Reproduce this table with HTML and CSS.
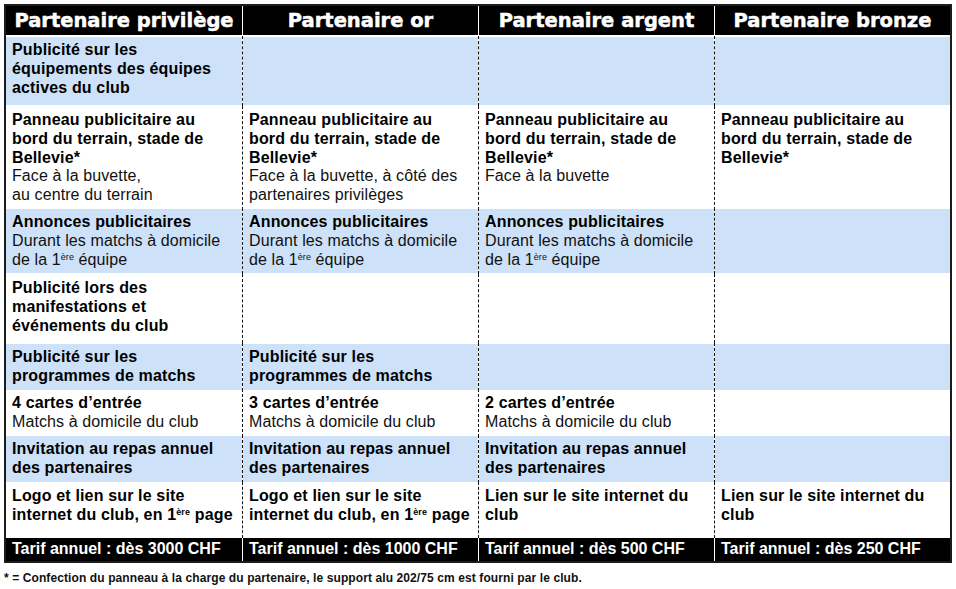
FILE: index.html
```html
<!DOCTYPE html>
<html lang="fr">
<head>
<meta charset="utf-8">
<title>Partenaires</title>
<link rel="stylesheet" href="styles.css">
</head>
<body>
<div class="sheet">
  <div class="tbl">
    <div class="row head">
      <div class="cell"><div class="tx">Partenaire privilège</div></div>
      <div class="cell"><div class="tx">Partenaire or</div></div>
      <div class="cell"><div class="tx">Partenaire argent</div></div>
      <div class="cell"><div class="tx">Partenaire bronze</div></div>
    </div>
    <div class="row blue r1">
      <div class="cell"><div class="tx"><b>Publicité sur les<br>équipements des équipes<br>actives du club</b></div></div>
      <div class="cell"></div>
      <div class="cell"></div>
      <div class="cell"></div>
    </div>
    <div class="row r2">
      <div class="cell"><div class="tx"><b>Panneau publicitaire au<br>bord du terrain, stade de<br>Bellevie*</b><br>Face à la buvette,<br>au centre du terrain</div></div>
      <div class="cell"><div class="tx"><b>Panneau publicitaire au<br>bord du terrain, stade de<br>Bellevie*</b><br>Face à la buvette, à côté des<br>partenaires privilèges</div></div>
      <div class="cell"><div class="tx"><b>Panneau publicitaire au<br>bord du terrain, stade de<br>Bellevie*</b><br>Face à la buvette</div></div>
      <div class="cell"><div class="tx"><b>Panneau publicitaire au<br>bord du terrain, stade de<br>Bellevie*</b></div></div>
    </div>
    <div class="row blue r3">
      <div class="cell"><div class="tx"><b>Annonces publicitaires</b><br>Durant les matchs à domicile<br>de la 1<sup>ère</sup> équipe</div></div>
      <div class="cell"><div class="tx"><b>Annonces publicitaires</b><br>Durant les matchs à domicile<br>de la 1<sup>ère</sup> équipe</div></div>
      <div class="cell"><div class="tx"><b>Annonces publicitaires</b><br>Durant les matchs à domicile<br>de la 1<sup>ère</sup> équipe</div></div>
      <div class="cell"></div>
    </div>
    <div class="row r4">
      <div class="cell"><div class="tx"><b>Publicité lors des<br>manifestations et<br>événements du club</b></div></div>
      <div class="cell"></div>
      <div class="cell"></div>
      <div class="cell"></div>
    </div>
    <div class="row blue r5">
      <div class="cell"><div class="tx"><b>Publicité sur les<br>programmes de matchs</b></div></div>
      <div class="cell"><div class="tx"><b>Publicité sur les<br>programmes de matchs</b></div></div>
      <div class="cell"></div>
      <div class="cell"></div>
    </div>
    <div class="row r6">
      <div class="cell"><div class="tx"><b>4 cartes d’entrée</b><br>Matchs à domicile du club</div></div>
      <div class="cell"><div class="tx"><b>3 cartes d’entrée</b><br>Matchs à domicile du club</div></div>
      <div class="cell"><div class="tx"><b>2 cartes d’entrée</b><br>Matchs à domicile du club</div></div>
      <div class="cell"></div>
    </div>
    <div class="row blue r7">
      <div class="cell"><div class="tx"><b>Invitation au repas annuel<br>des partenaires</b></div></div>
      <div class="cell"><div class="tx"><b>Invitation au repas annuel<br>des partenaires</b></div></div>
      <div class="cell"><div class="tx"><b>Invitation au repas annuel<br>des partenaires</b></div></div>
      <div class="cell"></div>
    </div>
    <div class="row r8">
      <div class="cell"><div class="tx"><b>Logo et lien sur le site<br>internet du club, en 1<sup>ère</sup> page</b></div></div>
      <div class="cell"><div class="tx"><b>Logo et lien sur le site<br>internet du club, en 1<sup>ère</sup> page</b></div></div>
      <div class="cell"><div class="tx"><b>Lien sur le site internet du<br>club</b></div></div>
      <div class="cell"><div class="tx"><b>Lien sur le site internet du<br>club</b></div></div>
    </div>
    <div class="row foot">
      <div class="cell"><div class="tx">Tarif annuel : dès 3000 CHF</div></div>
      <div class="cell"><div class="tx">Tarif annuel : dès 1000 CHF</div></div>
      <div class="cell"><div class="tx">Tarif annuel : dès 500 CHF</div></div>
      <div class="cell"><div class="tx">Tarif annuel : dès 250 CHF</div></div>
    </div>
  </div>
  <p class="note">* = Confection du panneau à la charge du partenaire, le support alu 202/75 cm est fourni par le club.</p>
</div>
</body>
</html>
```

FILE: styles.css
```css
* { box-sizing: border-box; }
html, body { margin: 0; padding: 0; background: #fff; }
body {
  font-family: "Liberation Sans", Arial, sans-serif;
  color: #111;
}
.sheet { padding: 4px 0 0 4px; }
.tbl {
  width: 948px;
  border: 2px solid #1c1c1c;
  background: #fff;
}
.row {
  display: grid;
  grid-template-columns: repeat(4, 1fr);
}
.cell {
  padding: 1px 0;
  background-clip: content-box;
  min-width: 0;
}
.cell + .cell { border-left: 1px dashed #111; }
.tx {
  padding: 4px 6px;
  font-size: 16px;
  line-height: 18.75px;
  letter-spacing: 0.1px;
  white-space: nowrap;
}
.tx b { font-weight: 700; color: #000; letter-spacing: 0.15px; }
sup {
  font-size: 9px;
  line-height: 0;
  vertical-align: 5px;
}
.blue .cell { background-color: #cde1f8; }

.head { height: 30px; }
.head .cell { background-color: #000; padding: 0 0 1px; }
.head .cell + .cell { border-left: 1px dashed #fff; }
.head .tx {
  font-family: "DejaVu Sans", Verdana, sans-serif;
  font-weight: 700;
  font-size: 19.5px;
  line-height: 29px;
  letter-spacing: 0;
  color: #fff;
  -webkit-text-stroke: 0.5px #fff;
  text-align: center;
  padding: 0 2px;
}

.r1 { height: 70px; }
.r2 { height: 102px; }
.r3 { height: 66px; }
.r4 { height: 69px; }
.r5 { height: 46px; }
.r6 { height: 46px; }
.r7 { height: 47px; }
.r8 { height: 56px; }

.foot { height: 23px; }
.foot .cell { background-color: #000; padding: 0; }
.foot .cell + .cell { border-left: 1px dashed #fff; }
.foot .tx {
  color: #fff;
  font-weight: 700;
  letter-spacing: 0;
  padding: 2px 6px 0;
}

.note {
  margin: 8px 0 0;
  font-size: 12px;
  line-height: 14px;
  letter-spacing: 0.1px;
  font-weight: 700;
  color: #111;
}
```
